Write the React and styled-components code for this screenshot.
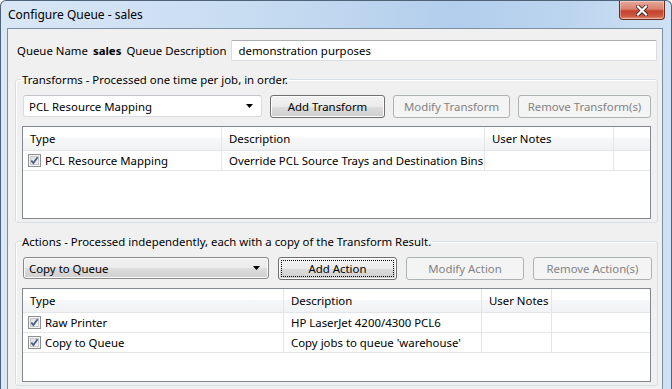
import styled, { createGlobalStyle, css } from 'styled-components';

const GlobalStyle = createGlobalStyle`
  html, body {
    margin: 0;
    padding: 0;
    background: #fff;
  }
  body {
    font-family: 'Noto Sans', 'Segoe UI', sans-serif;
    font-size: 11.4px;
    color: #000;
  }
`;

const Window = styled.div`
  width: 672px;
  height: 389px;
  box-sizing: border-box;
  overflow: hidden;
  display: flex;
  flex-direction: column;
  border: 1px solid #4f6378;
  border-bottom: none;
  border-radius: 6px 6px 0 0;
  background: linear-gradient(90deg, #d9e7f6 0%, #c6dbf1 40%, #b2ceec 68%, #bcd5ef 85%, #cfe0f3 100%);
`;

const TitleBar = styled.div`
  height: 27px;
  display: flex;
  justify-content: space-between;
  align-items: flex-start;
  padding-left: 7px;
  padding-right: 6px;
`;

const Caption = styled.span`
  line-height: 27px;
  font-size: 12px;
  color: #000;
`;

const CloseButton = styled.div`
  width: 46px;
  height: 19px;
  box-sizing: border-box;
  display: flex;
  align-items: center;
  justify-content: center;
  border: 1px solid #6b2b22;
  border-top: none;
  border-radius: 0 0 4px 4px;
  background: linear-gradient(#e9a99b 0%, #d8806d 45%, #c4412b 55%, #cc5a43 85%, #e09a82 100%);
  box-shadow: inset 0 0 0 1px rgba(255, 255, 255, 0.35);
`;

const Frame = styled.div`
  flex: 1;
  display: flex;
  padding-left: 6px;
  min-height: 0;
`;

const Client = styled.div`
  flex: none;
  width: 654px;
  background: #f0f0f0;
  border: 1px solid #7d8fa5;
  border-bottom: none;
  padding-top: 11px;
  display: flex;
  flex-direction: column;
  overflow: hidden;
`;

const QueueRow = styled.div`
  display: flex;
  align-items: center;
  gap: 5px;
  height: 21px;
  padding-left: 9px;
`;

const Label = styled.span`
  white-space: nowrap;
  font-weight: ${({ $bold }) => ($bold ? 700 : 400)};
`;

const TextInput = styled.input`
  margin-left: auto;
  margin-right: 6px;
  width: 426px;
  flex: none;
  height: 21px;
  box-sizing: border-box;
  border: 1px solid #d9dce2;
  border-top-color: #abadb3;
  border-radius: 2px;
  background: #fff;
  padding: 0 6px;
  font: inherit;
  color: #000;
  outline: none;
`;

const GroupBox = styled.fieldset`
  flex: none;
  box-sizing: border-box;
  width: 643px;
  min-width: 0;
  margin: ${({ $top }) => $top}px 0 0 7px;
  padding: 8px 6px 3px 6px;
  border: 1px solid #d5dfe5;
  border-radius: 3px;
  box-shadow: inset 1px 1px 0 #fff;
`;

const GroupLegend = styled.legend`
  padding: 0 1px;
  margin-left: -1px;
  line-height: 15px;
`;

const Toolbar = styled.div`
  display: flex;
  align-items: flex-start;
  gap: ${({ $gap }) => $gap}px;
  height: 23px;
  padding-left: 1px;
`;

const Combo = styled.div`
  width: ${({ $width }) => $width}px;
  flex: none;
  height: 22px;
  box-sizing: border-box;
  display: flex;
  align-items: center;
  justify-content: space-between;
  padding: 0 8px 0 5px;
  border-radius: 3px;
  ${({ $list }) =>
    $list
      ? css`
          border: 1px solid #8a8a8a;
          background: linear-gradient(#f2f2f2 0%, #ebebeb 50%, #dddddd 51%, #cfcfcf 100%);
          box-shadow: inset 0 0 0 1px #fafafa;
        `
      : css`
          border: 1px solid #d7dbe0;
          border-top-color: #c2c5ca;
          background: #fff;
        `}
`;

const Button = styled.button`
  width: ${({ $width }) => $width}px;
  flex: none;
  height: 23px;
  box-sizing: border-box;
  padding: 0;
  font: inherit;
  border-radius: 3px;
  border: 1px solid #707070;
  color: #000;
  background: linear-gradient(#f2f2f2 0%, #ebebeb 50%, #dddddd 51%, #cfcfcf 100%);
  box-shadow: inset 0 0 0 1px #fcfcfc;
  ${({ $focused }) =>
    $focused &&
    css`
      outline: 1px dotted #000;
      outline-offset: -4px;
    `}

  &:disabled {
    border-color: #adb2b5;
    background: #f4f4f4;
    color: #838383;
    box-shadow: none;
  }
`;

const ListView = styled.div`
  margin-top: 8px;
  width: 629px;
  height: ${({ $height }) => $height}px;
  box-sizing: border-box;
  border: 1px solid #828790;
  background: #fff;
`;

const HeaderRow = styled.div`
  display: flex;
  height: 24px;
  box-sizing: border-box;
  border-bottom: 1px solid #e3e5e8;
  background: linear-gradient(#ffffff 0%, #ffffff 45%, #f6f7f9 50%, #f1f2f4 100%);
`;

const Row = styled.div`
  display: flex;
  height: 20px;
  box-sizing: border-box;
  border-bottom: 1px solid #e6e6e6;
`;

const Cell = styled.div`
  flex: ${({ $width }) => ($width ? `0 0 ${$width}px` : '1')};
  box-sizing: border-box;
  display: flex;
  align-items: center;
  gap: 4px;
  padding-left: ${({ $pad }) => $pad ?? 7}px;
  border-right: ${({ $width }) => ($width ? '1px solid #e5e5e5' : 'none')};
  white-space: nowrap;
  overflow: hidden;
`;

const Arrow = () => (
  <svg width="7" height="4" viewBox="0 0 7 4">
    <path d="M0 0H7L3.5 4Z" fill="#000" />
  </svg>
);

const Check = () => (
  <svg width="13" height="13" viewBox="0 0 13 13">
    <defs>
      <linearGradient id="cb" x1="0" y1="0" x2="1" y2="1">
        <stop offset="0" stopColor="#d8dadc" />
        <stop offset="1" stopColor="#fbfbfb" />
      </linearGradient>
    </defs>
    <rect x="0.5" y="0.5" width="12" height="12" fill="#f4f4f4" stroke="#8e8f8f" />
    <rect x="2.5" y="2.5" width="8" height="8" fill="url(#cb)" stroke="#c6c8cb" />
    <path d="M3.3 6.6L5.4 9L9.6 3.2" fill="none" stroke="#4a5d8c" strokeWidth="1.8" />
  </svg>
);

const CloseGlyph = () => (
  <svg width="12" height="11" viewBox="0 0 12 11">
    <path d="M2 1.5L10 9.5M10 1.5L2 9.5" stroke="#4a2a26" strokeWidth="4" strokeLinecap="square" />
    <path d="M2 1.5L10 9.5M10 1.5L2 9.5" stroke="#fff" strokeWidth="2.2" strokeLinecap="square" />
  </svg>
);

const List = ({ columns, rows, height }) => (
  <ListView $height={height}>
    <HeaderRow>
      {columns.map((c) => (
        <Cell key={c.title} $width={c.width}>
          {c.title}
        </Cell>
      ))}
      <Cell />
    </HeaderRow>
    {rows.map((r) => (
      <Row key={r[0]}>
        <Cell $width={columns[0].width} $pad={5}>
          <Check />
          {r[0]}
        </Cell>
        <Cell $width={columns[1].width}>{r[1]}</Cell>
        <Cell $width={columns[2].width}></Cell>
        <Cell />
      </Row>
    ))}
  </ListView>
);

const App = () => (
  <>
    <GlobalStyle />
    <Window>
      <TitleBar>
        <Caption>Configure Queue - sales</Caption>
        <CloseButton>
          <CloseGlyph />
        </CloseButton>
      </TitleBar>
      <Frame>
        <Client>
          <QueueRow>
            <Label>Queue Name</Label>
            <Label $bold>sales</Label>
            <Label>Queue Description</Label>
            <TextInput defaultValue="demonstration purposes" readOnly />
          </QueueRow>

          <GroupBox $top={11}>
            <GroupLegend>Transforms - Processed one time per job, in order.</GroupLegend>
            <Toolbar $gap={8}>
              <Combo $width={239}>
                PCL Resource Mapping
                <Arrow />
              </Combo>
              <Button $width={115}>Add Transform</Button>
              <Button $width={117} disabled>Modify Transform</Button>
              <Button $width={133} disabled>Remove Transform(s)</Button>
            </Toolbar>
            <List
              height={93}
              columns={[
                { title: 'Type', width: 199 },
                { title: 'Description', width: 263 },
                { title: 'User Notes', width: 129 },
              ]}
              rows={[['PCL Resource Mapping', 'Override PCL Source Trays and Destination Bins']]}
            />
          </GroupBox>

          <GroupBox $top={11}>
            <GroupLegend>Actions - Processed independently, each with a copy of the Transform Result.</GroupLegend>
            <Toolbar $gap={9}>
              <Combo $width={246} $list>
                Copy to Queue
                <Arrow />
              </Combo>
              <Button $width={119} $focused>Add Action</Button>
              <Button $width={118} disabled>Modify Action</Button>
              <Button $width={119} disabled>Remove Action(s)</Button>
            </Toolbar>
            <List
              height={94}
              columns={[
                { title: 'Type', width: 261 },
                { title: 'Description', width: 198 },
                { title: 'User Notes', width: 70 },
              ]}
              rows={[
                ['Raw Printer', 'HP LaserJet 4200/4300 PCL6'],
                ['Copy to Queue', "Copy jobs to queue 'warehouse'"],
              ]}
            />
          </GroupBox>
        </Client>
      </Frame>
    </Window>
  </>
);

export default App;
